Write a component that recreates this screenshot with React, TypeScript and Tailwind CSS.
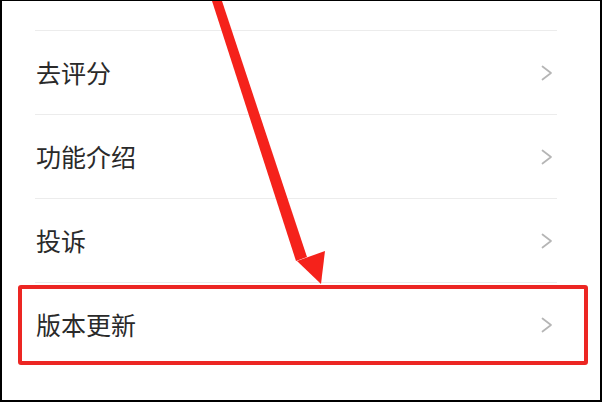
const items = ['去评分', '功能介绍', '投诉', '版本更新'];

function Chevron() {
  return (
    <svg width="12" height="16" viewBox="0 0 12 16" fill="none" className="mr-[4px]">
      <polyline points="1.5,1.5 10,8 1.5,14.5" stroke="#b5b5b5" strokeWidth="1.7" strokeLinecap="round" strokeLinejoin="round" />
    </svg>
  );
}

function Arrow() {
  // red annotation arrow drawn over the list
  return (
    <svg
      className="absolute left-0 top-0 pointer-events-none"
      width="602"
      height="402"
      viewBox="0 0 602 402"
    >
      <polygon points="210,0 220,0 305,256 294,260" fill="#f5221b" />
      <polygon points="319,283 295,260 323,250" fill="#f5221b" />
    </svg>
  );
}

export default function App() {
  return (
    <div
      className="relative w-[602px] h-[402px] overflow-hidden bg-white border-2 border-t border-black"
      style={{ fontFamily: '"Noto Sans CJK SC", "Noto Sans", sans-serif' }}
    >
      <div className="pt-[29px] pl-[33px] pr-[43px]">
        {items.map((label) => (
          <div key={label} className="h-[84px] flex items-center justify-between border-t border-[#ececec]">
            <span className="text-[25px] leading-none text-[#2a2a2a] pl-[1px]">{label}</span>
            <Chevron />
          </div>
        ))}
      </div>

      <div className="absolute left-[16px] top-[284px] w-[570px] h-[80px] border-4 border-[#ec2623] rounded-[3px]" />
      <Arrow />
    </div>
  );
}
